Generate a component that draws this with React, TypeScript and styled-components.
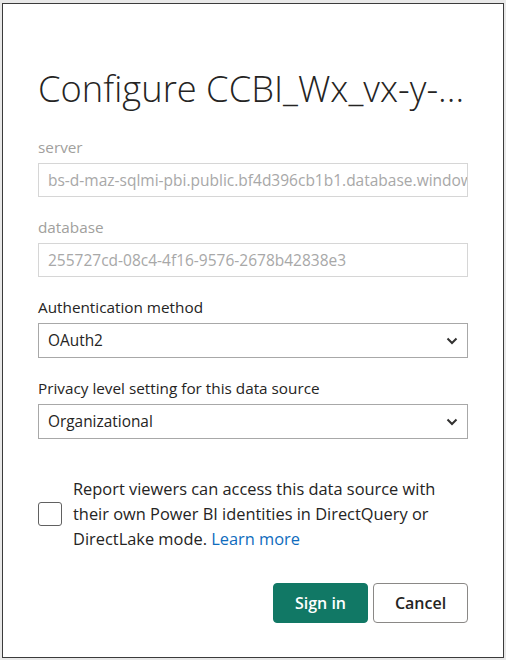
import styled, { createGlobalStyle } from "styled-components";

const GlobalStyle = createGlobalStyle`
  html, body {
    margin: 0;
    padding: 0;
    background: #e8e8e8;
  }
  body {
    font-family: "Open Sans", "Noto Sans", sans-serif;
    color: #252423;
  }
`;

// page behind the dialog
const Backdrop = styled.div`
  width: 506px;
  height: 660px;
  box-sizing: border-box;
  padding: 3px 2px 2px 2px;
  background: #e8e8e8;
`;

const Dialog = styled.div`
  width: 502px;
  height: 655px;
  box-sizing: border-box;
  border: 1px solid #3b3b3b;
  background: #fff;
  padding: 62px 35px 0 35px;
  display: flex;
  flex-direction: column;
`;

const Title = styled.h1`
  margin: 0 0 27px 0;
  font-size: 36.3px;
  font-weight: 300;
  line-height: 44px;
  color: #252423;
  white-space: nowrap;
`;

const Field = styled.div`
  display: flex;
  flex-direction: column;
  margin-bottom: 20px;
`;

const Label = styled.label<{ $muted?: boolean }>`
  font-size: 15.3px;
  line-height: 20px;
  margin-bottom: 6px;
  color: ${(p) => (p.$muted ? "#a19f9d" : "#252423")};
`;

const TextBox = styled.div`
  height: 34px;
  box-sizing: border-box;
  border: 1px solid #d6d6d6;
  padding: 0 9px;
  display: flex;
  align-items: center;
  overflow: hidden;
  white-space: nowrap;
  font-size: 15.5px;
  color: #a8a8a8;
`;

const Select = styled.div`
  height: 35px;
  box-sizing: border-box;
  border: 1px solid #a8a8a8;
  padding: 0 9px;
  display: flex;
  align-items: center;
  justify-content: space-between;
  font-size: 15.4px;
  color: #252423;
`;

const CheckRow = styled.div`
  display: flex;
  align-items: center;
  gap: 11px;
  margin-top: 17px;
`;

const Box = styled.div`
  width: 24px;
  height: 24px;
  flex-shrink: 0;
  box-sizing: border-box;
  border: 1px solid #616161;
  border-radius: 3px;
`;

const CheckText = styled.div`
  max-width: 385px;
  font-size: 16.4px;
  line-height: 25px;
  color: #252423;
`;

const Link = styled.a`
  color: #0f6cbd;
  text-decoration: none;
`;

const Footer = styled.div`
  display: flex;
  justify-content: flex-end;
  gap: 5px;
  margin-top: 32px;
`;

const Button = styled.button<{ $primary?: boolean }>`
  width: 95px;
  height: 40px;
  box-sizing: border-box;
  border-radius: 4px;
  font-family: inherit;
  font-size: 16px;
  font-weight: 600;
  cursor: pointer;
  border: 1px solid ${(p) => (p.$primary ? "#117865" : "#8a8886")};
  background: ${(p) => (p.$primary ? "#117865" : "#fff")};
  color: ${(p) => (p.$primary ? "#fff" : "#252423")};
`;

function Chevron() {
  return (
    <svg width="12" height="8" viewBox="0 0 12 8">
      <path d="M1.5 1.5 L6 6 L10.5 1.5" fill="none" stroke="#323130" strokeWidth="2" />
    </svg>
  );
}

export default function App() {
  return (
    <Backdrop>
      <GlobalStyle />
      <Dialog>
        <Title>Configure CCBI_Wx_vx-y-...</Title>
        <Field>
          <Label $muted>server</Label>
          <TextBox>bs-d-maz-sqlmi-pbi.public.bf4d396cb1b1.database.windows.net</TextBox>
        </Field>
        <Field>
          <Label $muted>database</Label>
          <TextBox>255727cd-08c4-4f16-9576-2678b42838e3</TextBox>
        </Field>
        <Field>
          <Label>Authentication method</Label>
          <Select>
            OAuth2
            <Chevron />
          </Select>
        </Field>
        <Field>
          <Label>Privacy level setting for this data source</Label>
          <Select>
            Organizational
            <Chevron />
          </Select>
        </Field>
        <CheckRow>
          <Box />
          <CheckText>
            Report viewers can access this data source with their own Power BI identities in
            DirectQuery or DirectLake mode. <Link href="#">Learn more</Link>
          </CheckText>
        </CheckRow>
        <Footer>
          <Button $primary>Sign in</Button>
          <Button>Cancel</Button>
        </Footer>
      </Dialog>
    </Backdrop>
  );
}
